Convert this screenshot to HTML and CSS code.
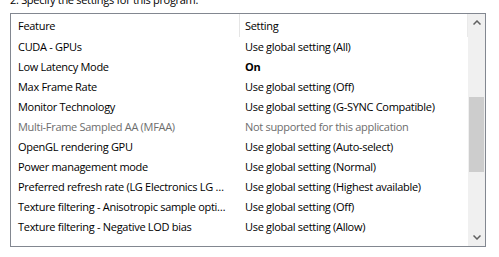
FILE: index.html
```html
<!DOCTYPE html>
<html>
<head>
<meta charset="utf-8">
<link rel="stylesheet" href="styles.css">
</head>
<body>
<div class="caption">2. Specify the settings for this program:</div>
<div class="listbox">
  <div class="list">
    <div class="header">
      <div class="hcell feat">Feature</div>
      <div class="hcell set">Setting</div>
    </div>
    <div class="row"><div class="cell feat">CUDA - GPUs</div><div class="cell set">Use global setting (All)</div></div>
    <div class="row"><div class="cell feat">Low Latency Mode</div><div class="cell set bold">On</div></div>
    <div class="row"><div class="cell feat">Max Frame Rate</div><div class="cell set">Use global setting (Off)</div></div>
    <div class="row"><div class="cell feat">Monitor Technology</div><div class="cell set">Use global setting (G-SYNC Compatible)</div></div>
    <div class="row disabled"><div class="cell feat">Multi-Frame Sampled AA (MFAA)</div><div class="cell set">Not supported for this application</div></div>
    <div class="row"><div class="cell feat">OpenGL rendering GPU</div><div class="cell set">Use global setting (Auto-select)</div></div>
    <div class="row"><div class="cell feat">Power management mode</div><div class="cell set">Use global setting (Normal)</div></div>
    <div class="row"><div class="cell feat">Preferred refresh rate (LG Electronics LG …</div><div class="cell set">Use global setting (Highest available)</div></div>
    <div class="row"><div class="cell feat">Texture filtering - Anisotropic sample opti…</div><div class="cell set">Use global setting (Off)</div></div>
    <div class="row"><div class="cell feat">Texture filtering - Negative LOD bias</div><div class="cell set">Use global setting (Allow)</div></div>
  </div>
  <div class="scrollbar">
    <div class="arrow up"><svg width="8" height="5" viewBox="0 0 8 5"><path d="M0.5 4.5 L4 1 L7.5 4.5" fill="none" stroke="#606060" stroke-width="1.5"/></svg></div>
    <div class="track"><div class="thumb"></div></div>
    <div class="arrow down"><svg width="8" height="5" viewBox="0 0 8 5"><path d="M0.5 0.5 L4 4 L7.5 0.5" fill="none" stroke="#606060" stroke-width="1.5"/></svg></div>
  </div>
</div>
</body>
</html>
```
FILE: styles.css
```css
html, body {
  margin: 0;
  padding: 0;
  background: #ffffff;
}
body {
  font-family: "Open Sans", "Noto Sans", sans-serif;
  font-size: 11px;
  letter-spacing: -0.3px;
  color: #000000;
  width: 499px;
  height: 257px;
  overflow: hidden;
}
.caption {
  margin: -8px 0 0 10px;
  height: 21px;
  line-height: 16px;
  white-space: nowrap;
}
.listbox {
  margin-left: 10px;
  width: 474px;
  height: 232px;
  border: 1px solid #828790;
  display: flex;
  overflow: hidden;
}
.list {
  flex: 1;
  display: flex;
  flex-direction: column;
  overflow: hidden;
}
.header {
  display: grid;
  grid-template-columns: 229px 228px;
  height: 23px;
}
.hcell {
  line-height: 23px;
  border-right: 1px solid #e5e5e5;
  padding-left: 7px;
  white-space: nowrap;
  overflow: hidden;
}
.hcell.set {
  padding-left: 5px;
  border-right: 1px solid #eaeaea;
}
.row {
  display: grid;
  grid-template-columns: 229px 228px;
  height: 20px;
}
.cell {
  line-height: 20px;
  padding-left: 7px;
  white-space: nowrap;
  overflow: hidden;
  text-overflow: ellipsis;
}
.cell.set {
  padding-left: 5px;
}
.bold {
  font-weight: 700;
}
.disabled {
  color: #6d6d6d;
}
.scrollbar {
  width: 17px;
  background: #f0f0f0;
  display: flex;
  flex-direction: column;
}
.arrow {
  height: 17px;
  display: flex;
  align-items: center;
  justify-content: center;
}
.track {
  flex: 1;
  position: relative;
}
.thumb {
  margin: 66px 1px 0 1px;
  height: 75px;
  background: #cdcdcd;
}
```
